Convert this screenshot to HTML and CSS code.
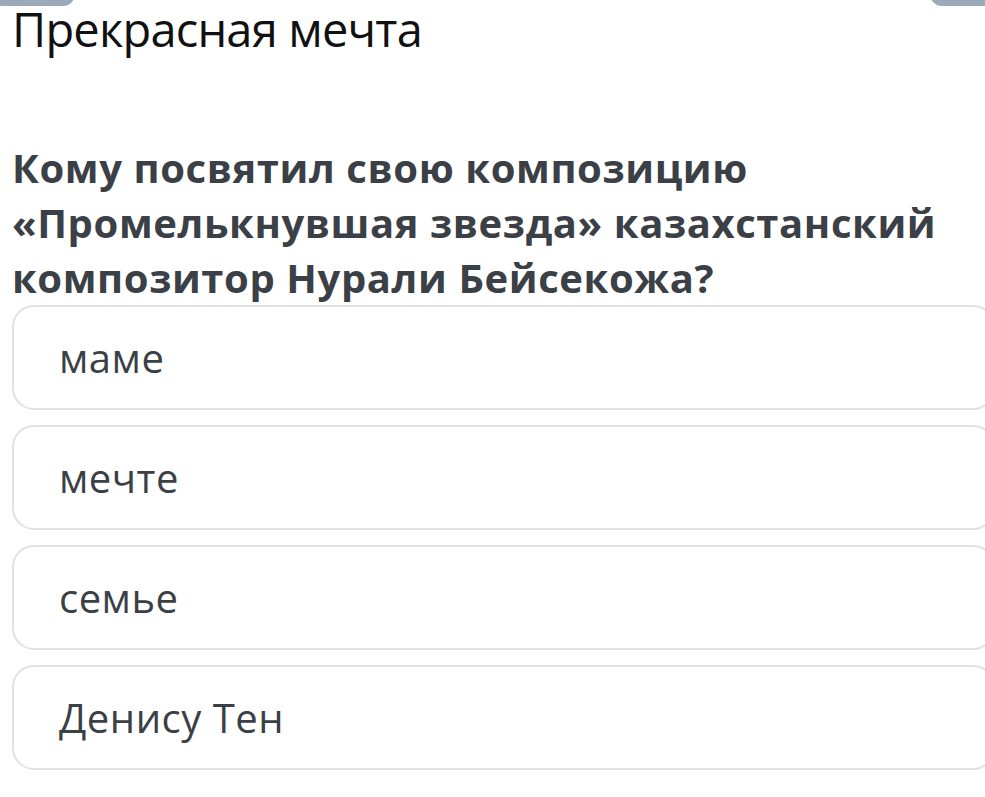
FILE: index.html
```html
<!DOCTYPE html>
<html lang="ru">
<head>
<meta charset="utf-8">
<link rel="stylesheet" href="styles.css">
</head>
<body>
<div class="topbar">
  <span class="tab tab-left"></span>
  <span class="tab tab-right"></span>
</div>
<h1 class="title">Прекрасная мечта</h1>
<h2 class="question">Кому посвятил свою композицию «Промелькнувшая звезда» казахстанский композитор Нурали Бейсекожа?</h2>
<div class="options">
  <div class="option">маме</div>
  <div class="option">мечте</div>
  <div class="option">семье</div>
  <div class="option">Денису Тен</div>
</div>
</body>
</html>
```
FILE: styles.css
```css
html, body {
  margin: 0;
  padding: 0;
  background: #ffffff;
  overflow: hidden;
}
body {
  width: 985px;
  height: 797px;
  position: relative;
}
.topbar {
  height: 0;
}
.tab {
  position: absolute;
  top: -20px;
  height: 26px;
  background: #9aaab8;
  border-radius: 0 0 12px 12px;
}
.tab-left { left: -10px; width: 85px; }
.tab-right { right: -10px; width: 65px; }
.title {
  margin: 0;
  padding: 0 0 0 12px;
  font-family: "Open Sans", sans-serif;
  font-weight: 400;
  font-size: 47px;
  line-height: 58px;
  letter-spacing: -0.8px;
  color: #111111;
}
.question {
  margin: 82px 0 0 12px;
  font-family: "Open Sans", sans-serif;
  font-weight: 700;
  font-size: 40px;
  line-height: 55px;
  color: #3b3f46;
  letter-spacing: 0.6px;
}
.options {
  display: flex;
  flex-direction: column;
  gap: 15px;
  margin: 0 -10px 0 12px;
}
.option {
  height: 101px;
  border: 2px solid #e2e2e2;
  border-radius: 22px;
  display: flex;
  align-items: center;
  padding-left: 45px;
  font-family: "Open Sans", sans-serif;
  font-size: 40px;
  color: #3b3f46;
  letter-spacing: 0.5px;
}
```
